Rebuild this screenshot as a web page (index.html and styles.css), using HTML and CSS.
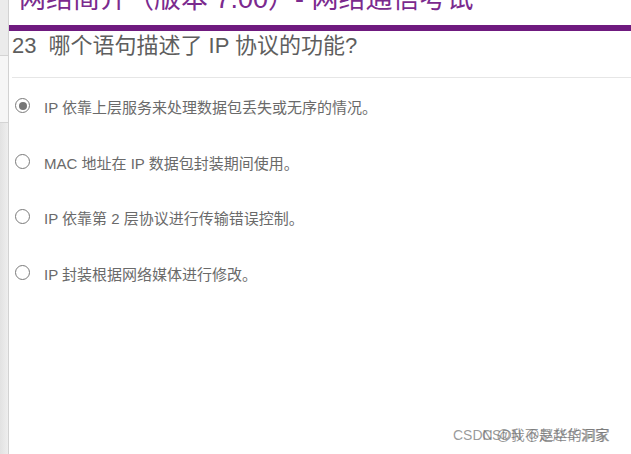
FILE: index.html
```html
<!DOCTYPE html>
<html lang="zh-CN">
<head>
<meta charset="utf-8">
<title>Quiz</title>
<link rel="stylesheet" href="styles.css">
</head>
<body>
<div class="app">
  <aside class="rail">
    <div class="rail-top"></div>
    <div class="rail-mid"></div>
    <div class="rail-rest"></div>
  </aside>
  <main class="content">
    <div class="title-wrap">
      <h1 class="title">网络简介（版本 7.00）- 网络通信考试</h1>
    </div>
    <div class="bar"></div>
    <h2 class="question"><span class="num">23</span>哪个语句描述了 IP 协议的功能?</h2>
    <div class="divider"></div>
    <ul class="options">
      <li class="option"><span class="radio checked"></span><span class="label">IP 依靠上层服务来处理数据包丢失或无序的情况。</span></li>
      <li class="option"><span class="radio"></span><span class="label">MAC 地址在 IP 数据包封装期间使用。</span></li>
      <li class="option"><span class="radio"></span><span class="label">IP 依靠第 2 层协议进行传输错误控制。</span></li>
      <li class="option"><span class="radio"></span><span class="label">IP 封装根据网络媒体进行修改。</span></li>
    </ul>
  </main>
</div>
<div class="watermark wm-a">CSDN @我不是赵华洞家</div>
<div class="watermark wm-b">CSDN @赵华的洞家</div>
</body>
</html>
```

FILE: styles.css
```css
html, body {
  margin: 0;
  padding: 0;
  background: #ffffff;
  overflow: hidden;
}

body {
  font-family: "Liberation Sans", Arial, "Noto Sans CJK SC", sans-serif;
  width: 631px;
  height: 454px;
  position: relative;
}

.app {
  display: flex;
  height: 454px;
}

.rail {
  width: 8px;
  border-right: 1px solid #d2d2d2;
  display: flex;
  flex-direction: column;
  flex-shrink: 0;
}

.rail-top {
  height: 55px;
  background: #ebebeb;
  border-bottom: 1px solid #d4d4d4;
}

.rail-mid {
  height: 66px;
  background: #f6f6f6;
  border-bottom: 1px solid #d4d4d4;
}

.rail-rest {
  flex: 1;
  background: linear-gradient(to right, #e2e2e2, #eeeeee);
}

.content {
  flex: 1;
  min-width: 0;
}

.title-wrap {
  height: 25px;
  overflow: hidden;
}

.title {
  margin: -14px 0 0 0;
  padding-left: 10px;
  font-size: 27px;
  line-height: 27px;
  font-weight: normal;
  color: #7b2a8e;
  white-space: nowrap;
}

.bar {
  height: 6px;
  background: #6f1a7f;
}

.question {
  margin: 0;
  padding-left: 3px;
  font-size: 22px;
  line-height: 30px;
  font-weight: normal;
  color: #5e5e5e;
  white-space: nowrap;
}

.num {
  margin-right: 12px;
}

.divider {
  height: 1px;
  background: #e6e6e6;
  margin: 16px 0 0 3px;
}

.options {
  list-style: none;
  margin: 0;
  padding: 20px 0 0 6px;
}

.option {
  display: flex;
  align-items: flex-start;
  gap: 14px;
  line-height: 20px;
  height: 20px;
  margin-bottom: 35.5px;
  font-size: 15px;
  color: #6a6a6a;
  white-space: nowrap;
}

.radio {
  width: 15px;
  height: 15px;
  box-sizing: border-box;
  border: 1.3px solid #7a7a7a;
  border-radius: 50%;
  flex-shrink: 0;
  display: flex;
  align-items: center;
  justify-content: center;
  background: #ffffff;
}

.radio.checked::after {
  content: "";
  width: 8px;
  height: 8px;
  border-radius: 50%;
  background: #767676;
}

.watermark {
  position: absolute;
  top: 428px;
  font-size: 14px;
  line-height: 14px;
  color: rgba(110, 110, 110, 0.7);
  white-space: nowrap;
}

.wm-a {
  left: 453px;
}

.wm-b {
  left: 482px;
}
```
